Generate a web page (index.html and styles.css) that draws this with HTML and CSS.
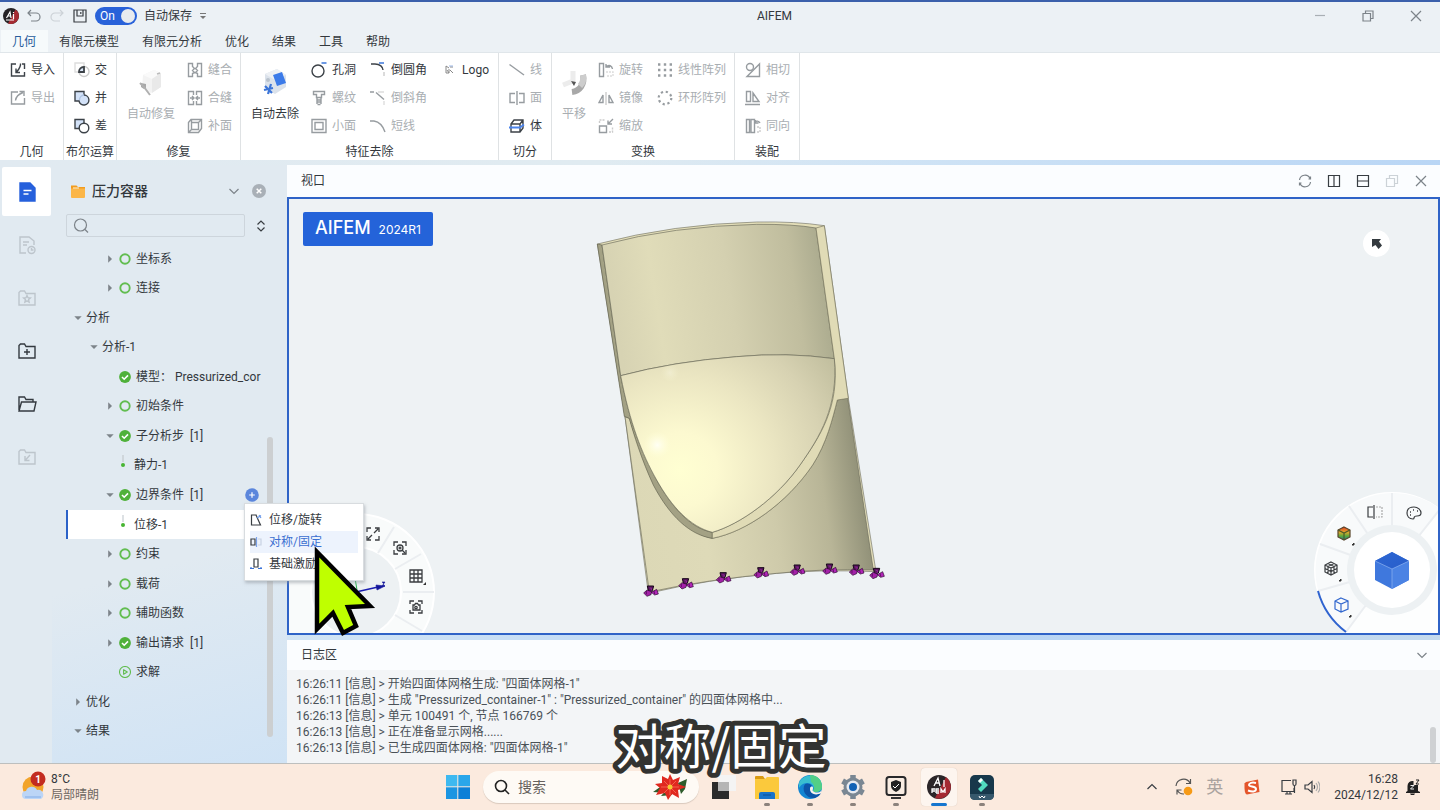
FILE: index.html
```html
<!DOCTYPE html>
<html lang="zh-CN">
<head>
<meta charset="utf-8">
<title>AIFEM</title>
<link rel="stylesheet" href="styles.css">
</head>
<body>
<svg class="defs" aria-hidden="true">
  <defs>
    <linearGradient id="cube-top" x1="0" y1="0" x2="1" y2="1"><stop offset="0" stop-color="#2d67d3"/><stop offset="1" stop-color="#285dca"/></linearGradient>
    <linearGradient id="rainbow" x1="0" y1="0" x2="0" y2="1"><stop offset="0" stop-color="#e33b20"/><stop offset=".4" stop-color="#e0a82e"/><stop offset=".7" stop-color="#5aa83a"/><stop offset="1" stop-color="#247a9a"/></linearGradient>
  </defs>
  <symbol id="i-ring" viewBox="0 0 12 12"><circle cx="6" cy="6" r="4.7" fill="none" stroke="#62bd50" stroke-width="1.9"/></symbol>
  <symbol id="i-ok" viewBox="0 0 12 12"><circle cx="6" cy="6" r="5.9" fill="#4fb13a"/><path d="M3 6l2.2 2.2L9 4.4" fill="none" stroke="#fff" stroke-width="1.6"/></symbol>
  <symbol id="i-play" viewBox="0 0 12 12"><circle cx="6" cy="6" r="5.5" fill="none" stroke="#62bd50" stroke-width="1.1"/><path d="M4.6 3.7v4.6L8.3 6z" fill="none" stroke="#62bd50" stroke-width="1.1" stroke-linejoin="round"/></symbol>
  <symbol id="i-down" viewBox="0 0 8 8"><path d="M.3 2.2h7.4L4 6z" fill="#7d848a"/></symbol>
  <symbol id="i-right" viewBox="0 0 8 8"><path d="M2.2.3v7.4L6 4z" fill="#7d848a"/></symbol>
  <symbol id="i-folder" viewBox="0 0 20 20"><path d="M2 4.5V17h16V5.5H9L7.500 3H3.500z"/></symbol>
</svg>

<header class="titlebar">
  <div class="quick">
    <svg class="logo" viewBox="0 0 16 16"><circle cx="8" cy="8" r="8" fill="#252326"/><path d="M12.500 1.500A8 8 0 0 1 5 15.500z" fill="#a52a32"/><path d="M3.500 10L7 4l1 6M5 8h3M3 12h8M10.500 6v5M10.500 4v1" fill="none" stroke="#fff" stroke-width="1.200"/></svg>
    <button class="plain" aria-label="撤销"><svg class="ic16 mid" viewBox="0 0 16 16"><path d="M5 2L2 5l3 3M2 5h8a4 4 0 0 1 0 8H5"/></svg></button>
    <button class="plain" aria-label="重做"><svg class="ic16 pale" viewBox="0 0 16 16"><path d="M11 2l3 3-3 3M14 5H6a4 4 0 0 0 0 8h5"/></svg></button>
    <button class="plain" aria-label="保存"><svg class="ic16 dark" viewBox="0 0 16 16"><path d="M2 2h12v12H2zM5 2v6h6V2M8.800 4v2"/></svg></button>
    <label class="switch"><input type="checkbox" checked aria-label="自动保存"><span>On</span></label>
    <span class="autosave">自动保存</span>
    <button class="plain" aria-label="更多"><svg class="ic8" viewBox="0 0 8 8"><path d="M1 1.500h6" stroke="#777" fill="none"/><path d="M1 4h6L4 7z" fill="#777"/></svg></button>
  </div>
  <h1 class="app-name">AIFEM</h1>
  <div class="winctl">
    <button class="plain" aria-label="最小化"><svg class="ic12 pale2" viewBox="0 0 12 12"><path d="M1 5.500h10"/></svg></button>
    <button class="plain" aria-label="还原"><svg class="ic12 mid" viewBox="0 0 12 12"><path d="M1 3.500h7.500V11H1zM3.500 3.500V1H11v7.500H8.500"/></svg></button>
    <button class="plain" aria-label="关闭"><svg class="ic12 mid" viewBox="0 0 12 12"><path d="M1 1l10 10M11 1L1 11"/></svg></button>
  </div>
</header>

<nav class="tabs">
  <a href="#" class="on">几何</a><a href="#">有限元模型</a><a href="#">有限元分析</a><a href="#">优化</a><a href="#">结果</a><a href="#">工具</a><a href="#">帮助</a>
</nav>

<section class="ribbon">
  <div class="group g-geo">
    <div class="tools"><div class="col">
      <button><svg viewBox="0 0 16 16"><path d="M6 2H1.500v12h13v-4M14.500 7V2H12M10.500 1.500C11 5 9 7 6.500 10M6 6.500V10.500h4"/></svg>导入</button>
      <button disabled><svg viewBox="0 0 16 16"><path d="M8 2H1.500v12h13V8M5.500 10.500C6 6 9 4 13 2.500M9.500 1.500H14V6"/></svg>导出</button>
    </div></div>
    <div class="caption">几何</div>
  </div>
  <div class="group g-bool">
    <div class="tools"><div class="col">
      <button><svg viewBox="0 0 16 16"><path d="M1 1h9v9H1z" stroke="#ddd"/><circle cx="10" cy="9.500" r="5" stroke="#ccc"/><path d="M5 10a5 5 0 0 1 5-5v5z" fill="#dce7f8" stroke-width="1.800"/></svg>交</button>
      <button><svg viewBox="0 0 16 16"><path d="M1 1.500h9V5a5 5 0 1 1-5 6H1z" fill="#d3e2f8"/><path d="M5.500 10a5 5 0 0 1 4.500-5" stroke="#aec4e4"/></svg>并</button>
      <button><svg viewBox="0 0 16 16"><path d="M1 1.500h9V5L5 10.500H1z" fill="#d3e2f8"/><circle cx="10" cy="10" r="4.800" fill="#fff"/></svg>差</button>
    </div></div>
    <div class="caption">布尔运算</div>
  </div>
  <div class="group g-fix">
    <div class="tools">
      <button class="big" disabled><svg viewBox="0 0 32 32"><path d="M8 9l11-5 7 3v14l-10 6-9-5z" fill="#f3f3f3"/><path d="M8 9l9 4 9-6-7-3z" fill="#fafafa"/><path d="M17 13v14l9-6V7z" fill="#e9e9e9"/><path d="M22 8l3-1" stroke="#bbb"/><path d="M6 17l5 1v4l-2 1-3-2z" fill="#a8a8a8"/><path d="M9 21l6 8M5 17l5 5" stroke="#b0b0b0" stroke-width="2"/></svg>自动修复</button>
      <div class="col">
        <button disabled><svg viewBox="0 0 16 16"><path d="M1.500 1.500h4v3l2 2-2 2 2 2-2 1v3h-4zM14.500 1.500h-4v3l-2 2 2 2-2 2 2 1v3h4z"/></svg>缝合</button>
        <button disabled><svg viewBox="0 0 16 16"><path d="M6.500 5V1.500h-5v13h5V11M9.500 5V1.500h5v13h-5V11M3 8h4M5 6l2 2-2 2M13 8H9M11 6L9 8l2 2"/></svg>合缝</button>
        <button disabled><svg viewBox="0 0 16 16"><path d="M1.500 4.500L4 1.500h10.500v9l-3 4h-10zM4.500 4.500h7v7h-7zM4.500 11.500l-3 3M11.500 4.500l3-3M4.500 4.500V1.500"/></svg>补面</button>
      </div>
    </div>
    <div class="caption">修复</div>
  </div>
  <div class="group g-feat">
    <div class="tools">
      <button class="big"><svg viewBox="0 0 32 32"><path d="M6 8l12-5 9 6v12l-11 7-10-6z" fill="#dbe2eb"/><path d="M6 8l12-5 9 6-11 5z" fill="#edf0f4"/><path d="M14 9l9-3 4 11-9 3z" fill="#3c7be9"/><circle cx="9" cy="14" r="2" fill="#b9c2cd"/><path d="M6 20l7 7M12 18l-3 10M5 24l9-2" stroke="#3c75d8" stroke-width="2.200"/></svg>自动去除</button>
      <div class="col">
        <button><svg viewBox="0 0 16 16"><circle cx="7" cy="9" r="6"/><path d="M10.500 1h5" stroke="#5c8de0" stroke-width="1.800"/></svg>孔洞</button>
        <button disabled><svg viewBox="0 0 16 16"><path d="M2.500 1.500h11v3h-3v3h-5v-3h-3zM5.500 7.500h5M6 10h4M6 12h4M6.500 14.500h3M6 8v6M10 8v6"/></svg>螺纹</button>
        <button disabled><svg viewBox="0 0 16 16"><path d="M1 1.500h14v13H1zM4 4.500h8v7H4z"/></svg>小面</button>
      </div>
      <div class="col">
        <button><svg viewBox="0 0 16 16"><path d="M1 2h4c5 0 8 3 8 6"/><path d="M9 1h5" stroke="#5c8de0" stroke-width="1.800"/><path d="M14 10v4" stroke="#ccc"/></svg>倒圆角</button>
        <button disabled><svg viewBox="0 0 16 16"><path d="M0 2h4M6 2.500l8 7"/><path d="M8 2h6M14 11v4" stroke="#ddd"/></svg>倒斜角</button>
        <button disabled><svg viewBox="0 0 16 16"><path d="M0 3h4c6 1 9 5 11 11"/></svg>短线</button>
      </div>
      <div class="col">
        <button><svg viewBox="0 0 16 16"><path d="M5 4v7M5 4l3 2M5 11h3l-2-3M8 7v4" stroke="#888" stroke-width="1"/><path d="M9 5h3M9 8l3 3" stroke="#888" stroke-width="1"/><path d="M8 4h4" stroke="#9bb6e5" stroke-width="1"/></svg>Logo</button>
      </div>
    </div>
    <div class="caption">特征去除</div>
  </div>
  <div class="group g-cut">
    <div class="tools"><div class="col">
      <button disabled><svg viewBox="0 0 16 16"><path d="M.5 2.500l14.500 10.500"/></svg>线</button>
      <button disabled><svg viewBox="0 0 16 16"><path d="M6 3.500H1v9h5M10 3.500h5v9h-5M8 1v14"/></svg>面</button>
      <button><svg viewBox="0 0 16 16"><path d="M2 6l3-4h9v8l-3 4H2zM2 6h9v8M11 6l3-4"/><path d="M0 9.500h11l4-3" stroke="#4b84ec" stroke-width="1.800"/></svg>体</button>
    </div></div>
    <div class="caption">切分</div>
  </div>
  <div class="group g-move">
    <div class="tools">
      <button class="big" disabled><svg viewBox="0 0 32 32"><path d="M15 5v12M5 19l10-4" stroke="#ececec" stroke-width="5"/><path d="M25 9c2 9-3 16-11 17" stroke="#a8a8a8" stroke-width="6" fill="none"/><path d="M25 9c1 5 0 8-3 11" stroke="#cdcdcd" stroke-width="6" fill="none"/><path d="M13 15l5 1-2 4z" fill="#555"/></svg>平移</button>
      <div class="col">
        <button disabled><svg viewBox="0 0 16 16"><path d="M1.500 1.500h4v13h-4zM8 5c3-3 6-1 6.500 2M8 2v3h4"/><path d="M8 10h7v4H8" stroke="#ddd" stroke-dasharray="2 1"/></svg>旋转</button>
        <button disabled><svg viewBox="0 0 16 16"><path d="M1 12.500L5 5v7.500zM15 12.500L11 5v7.500z"/><path d="M8 2v13" stroke="#ccc"/></svg>镜像</button>
        <button disabled><svg viewBox="0 0 16 16"><path d="M1.500 8h7v6.500h-7zM15 1l-5 5M10 2.500V6h4"/><path d="M1.500 5V2H7M11 14h3.500V9" stroke="#ccc" stroke-dasharray="2 1"/></svg>缩放</button>
      </div>
      <div class="col">
        <button disabled><svg viewBox="0 0 16 16"><path d="M1 2.500h14M1 8h14M1 13.500h14" stroke-width="2.400" stroke-dasharray="2.400 3.400"/></svg>线性阵列</button>
        <button disabled><svg viewBox="0 0 16 16"><circle cx="8" cy="8" r="6.300" stroke-width="2.200" stroke-dasharray="2.200 2.748"/></svg>环形阵列</button>
      </div>
    </div>
    <div class="caption">变换</div>
  </div>
  <div class="group g-asm">
    <div class="tools"><div class="col">
      <button disabled><svg viewBox="0 0 16 16"><circle cx="5" cy="5" r="3.500"/><path d="M2 14.500L14.500 2v12.500z"/></svg>相切</button>
      <button disabled><svg viewBox="0 0 16 16"><path d="M1.500 1.500h4v10h-4zM8 3l6 8.500H8zM0 14.500h15" /></svg>对齐</button>
      <button disabled><svg viewBox="0 0 16 16"><path d="M1.500 1.500h3v13h-3zM6 1.500h3.500v13H6zM10 5c1-3 4-2 5 0M10.500 2v3h3"/><path d="M12 9h3v5h-3" stroke="#ccc" stroke-dasharray="2 1"/></svg>同向</button>
    </div></div>
    <div class="caption">装配</div>
  </div>
</section>

<main class="work">
  <nav class="rail">
    <button class="on" aria-label="模型"><svg viewBox="0 0 20 20"><path d="M3 1h10l5 5v13H3z" fill="#2660dc" stroke="#2660dc"/><path d="M6.500 8.500h8M6.500 12h5" stroke="#fff" stroke-width="1.500"/></svg></button>
    <button class="off" aria-label="记录"><svg viewBox="0 0 20 20"><path d="M9 18H3V2h9l5 4v4M6 7h6M6 10h4"/><circle cx="14.500" cy="15" r="3.500"/><path d="M14.500 13v2h2"/></svg></button>
    <button class="off" aria-label="收藏"><svg viewBox="0 0 20 20"><use href="#i-folder"/><path d="M10 7.500l1 2.200 2.400.3-1.800 1.600.5 2.400-2.100-1.200L7.900 14l.5-2.400L6.600 10l2.400-.3z"/></svg></button>
    <button aria-label="新建"><svg viewBox="0 0 20 20"><use href="#i-folder"/><path d="M10 8v6M7 11h6"/></svg></button>
    <button aria-label="打开"><svg viewBox="0 0 20 20"><path d="M2 16V3h5.500L9 5.500h7V8M2 17L4.500 8H19l-2 9z"/></svg></button>
    <button class="off" aria-label="导入"><svg viewBox="0 0 20 20"><use href="#i-folder"/><path d="M13 8l-5 5.500M8 9v4.500h4.500"/></svg></button>
  </nav>

  <aside class="panel">
    <div class="panel-head">
      <svg class="ic16" viewBox="0 0 16 16"><path d="M1 2.500h5.500L8 4h7v3H1z" fill="#f29c1f"/><path d="M1 5.500h14V14q0 1-1 1H2q-1 0-1-1z" fill="#fbb648"/><path d="M3 5h6" stroke="#fff3d6"/></svg>
      <h2>压力容器</h2>
      <button class="plain" aria-label="展开"><svg class="ic12 mid" viewBox="0 0 12 12"><path d="M1.500 4L6 8.500 10.500 4"/></svg></button>
      <button class="plain" aria-label="关闭"><svg class="ic14" viewBox="0 0 14 14"><circle cx="7" cy="7" r="7" fill="#a9b0b7"/><path d="M4.700 4.700l4.600 4.600M9.300 4.700L4.700 9.300" stroke="#fff" stroke-width="1.500"/></svg></button>
    </div>
    <div class="search-row">
      <label class="find"><svg class="ic16 mid" viewBox="0 0 16 16"><circle cx="7.500" cy="7" r="6"/><path d="M12 11.500l3 3"/></svg><input type="search" aria-label="搜索模型树"></label>
      <button class="plain" aria-label="排序"><svg class="ic12 dark" viewBox="0 0 12 12"><path d="M2.500 4.500L6 1l3.500 3.500M2.500 7.500L6 11l3.500-3.500"/></svg></button>
    </div>
    <div class="tree-wrap">
      <ul class="tree">
        <li class="l3"><svg class="ar"><use href="#i-right"/></svg><svg class="st"><use href="#i-ring"/></svg>坐标系</li>
        <li class="l3"><svg class="ar"><use href="#i-right"/></svg><svg class="st"><use href="#i-ring"/></svg>连接</li>
        <li class="l1"><svg class="ar"><use href="#i-down"/></svg>分析</li>
        <li class="l2"><svg class="ar"><use href="#i-down"/></svg>分析-1</li>
        <li class="l3 leaf"><svg class="st"><use href="#i-ok"/></svg>模型： Pressurized_cor</li>
        <li class="l3"><svg class="ar"><use href="#i-right"/></svg><svg class="st"><use href="#i-ring"/></svg>初始条件</li>
        <li class="l3"><svg class="ar"><use href="#i-down"/></svg><svg class="st"><use href="#i-ok"/></svg>子分析步&nbsp; [1]</li>
        <li class="l4"><svg class="dot" viewBox="0 0 6 20"><path d="M3 0v7" stroke="#cfd6db" stroke-width="2"/><circle cx="3" cy="10" r="2" fill="#48b533"/></svg>静力-1</li>
        <li class="l3"><svg class="ar"><use href="#i-down"/></svg><svg class="st"><use href="#i-ok"/></svg>边界条件&nbsp; [1]<button class="plain add" aria-label="添加"><svg class="ic14" viewBox="0 0 14 14"><circle cx="7" cy="7" r="6.800" fill="#5b86dc"/><path d="M7 4.200v5.600M4.200 7h5.600" stroke="#fff" stroke-width="1.200"/></svg></button></li>
        <li class="l4 sel"><svg class="dot" viewBox="0 0 6 20"><path d="M3 0v7" stroke="#dde1e4" stroke-width="2"/><circle cx="3" cy="10" r="2" fill="#48b533"/></svg>位移-1</li>
        <li class="l3"><svg class="ar"><use href="#i-right"/></svg><svg class="st"><use href="#i-ring"/></svg>约束</li>
        <li class="l3"><svg class="ar"><use href="#i-right"/></svg><svg class="st"><use href="#i-ring"/></svg>载荷</li>
        <li class="l3"><svg class="ar"><use href="#i-right"/></svg><svg class="st"><use href="#i-ring"/></svg>辅助函数</li>
        <li class="l3"><svg class="ar"><use href="#i-right"/></svg><svg class="st"><use href="#i-ok"/></svg>输出请求&nbsp; [1]</li>
        <li class="l3 leaf"><svg class="st"><use href="#i-play"/></svg>求解</li>
        <li class="l1"><svg class="ar"><use href="#i-right"/></svg>优化</li>
        <li class="l1"><svg class="ar"><use href="#i-down"/></svg>结果</li>
      </ul>
      <div class="thumb"></div>
    </div>
  </aside>

  <div class="stage">
    <section class="viewport">
      <header class="bar">
        <h2>视口</h2>
        <button class="plain" aria-label="刷新"><svg class="ic14 mid" viewBox="0 0 14 14"><path d="M1.500 6A5.500 5.500 0 0 1 12 4.500M12.500 8A5.500 5.500 0 0 1 2 9.500M12.500 2.500v2.500h-2M1.500 11.500V9h2"/></svg></button>
        <button class="plain" aria-label="左右分屏"><svg class="ic14 dark" viewBox="0 0 14 14"><path d="M1.500 1.500h11v11h-11zM7 1.500v11"/></svg></button>
        <button class="plain" aria-label="上下分屏"><svg class="ic14 dark" viewBox="0 0 14 14"><path d="M1.500 1.500h11v11h-11zM1.500 7h11"/></svg></button>
        <button class="plain" aria-label="还原"><svg class="ic14 pale" viewBox="0 0 14 14"><path d="M1.500 4.500h8v8h-8zM4.500 4.500v-3h8v8h-3"/></svg></button>
        <button class="plain" aria-label="关闭"><svg class="ic14 mid" viewBox="0 0 14 14"><path d="M2 2l10 10M12 2L2 12"/></svg></button>
      </header>
      <div class="canvas">
        <div class="badge"><strong>AIFEM</strong><span>2024R1</span></div>
        <button class="pick" aria-label="选择"><svg class="ic12" viewBox="0 0 12 12"><path d="M1 1h9L8 3.500l3 4L7.500 11l-3-4L1 9z" fill="#343a3f"/></svg></button>

        <svg class="model" viewBox="0 0 930 1200" aria-label="压力容器模型">
          <defs>
            <linearGradient id="cyl" x1="0" y1="0" x2="1" y2="-.1"><stop offset="0" stop-color="#d7d3b3"/><stop offset=".18" stop-color="#e0dcb9"/><stop offset=".5" stop-color="#d4d0b0"/><stop offset=".78" stop-color="#c0bd9e"/><stop offset=".93" stop-color="#a9a98d"/><stop offset="1" stop-color="#b3b295"/></linearGradient>
            <linearGradient id="low" gradientUnits="userSpaceOnUse" x1="130" y1="950" x2="830" y2="850"><stop offset="0" stop-color="#dcd8b6"/><stop offset=".3" stop-color="#dedab8"/><stop offset=".6" stop-color="#cecaaa"/><stop offset=".82" stop-color="#b8b597"/><stop offset="1" stop-color="#8e8e76"/></linearGradient>
            <radialGradient id="dome" gradientUnits="userSpaceOnUse" cx="270" cy="780" r="560"><stop offset="0" stop-color="#ffffd2"/><stop offset=".2" stop-color="#fcf9d0"/><stop offset=".5" stop-color="#ebe6c2"/><stop offset=".78" stop-color="#d7d2b2"/><stop offset="1" stop-color="#c2bf9f"/></radialGradient>
            <radialGradient id="glow"><stop offset="0" stop-color="#fffff4"/><stop offset="1" stop-color="#ffffd8" stop-opacity="0"/></radialGradient>
            <g id="pin"><path d="M-8-15H11L7-1-4 2z" fill="#5a1660" stroke="#160618" stroke-width="3"/><path d="M-1-9l6 1-2 8" fill="none" stroke="#a62bac" stroke-width="2"/><path d="M-19 6l10-9 14 5-2 9-12 5z" fill="#a321a8" stroke="#2a062d" stroke-width="2"/><path d="M4 4l16-9 5 14-11 3z" fill="#b124b8" stroke="#2a062d" stroke-width="2"/><path d="M-11 0v10M12 0l2 10" stroke="#3a0b3d" stroke-width="2"/></g>
          </defs>
          <path d="M22 102Q250 42 500 36 620 34 703 47L775 565 858 1085Q690 1078 560 1090 350 1108 175 1150L105 620Z" fill="#e4dfb9" stroke="#77776a" stroke-width="2"/>
          <path d="M105 620L118 625C190 850 270 965 367 985 470 965 590 880 668 765 710 700 728 625 742 570L773 564 850 1080Q690 1076 560 1090 350 1108 178 1146Z" fill="url(#low)" stroke="#6d6c5c" stroke-width="2"/>
          <path d="M22 102L36 105 92 497C120 640 155 730 200 810 245 890 300 955 367 967V985C300 975 240 920 190 825 155 750 130 670 118 625L103 619 22 102Z" fill="#a3a184" stroke="#62624f" stroke-width="2"/>
          <path d="M36 105Q250 48 500 43 610 42 678 54L733 446Q590 426 440 440 250 455 92 497Z" fill="url(#cyl)" stroke="#6d6c5c" stroke-width="2"/>
          <path d="M678 54L703 47 775 565 742 570C728 625 710 700 668 765 590 880 470 965 367 985V967C450 943 560 865 630 765 690 680 750 590 733 446Z" fill="#e0dbb6" stroke="#77765f" stroke-width="2"/>
          <path d="M92 497Q250 455 440 440 590 426 733 446C745 590 690 680 630 765 560 865 450 943 367 967 300 950 245 890 200 810 155 730 120 640 92 497Z" fill="url(#dome)" stroke="#6d6c5c" stroke-width="2"/>
          <circle cx="202" cy="705" r="42" fill="url(#glow)"/><circle cx="240" cy="488" r="28" fill="url(#glow)" opacity=".3"/>
          <use href="#pin" x="180" y="1143"/><use href="#pin" x="285" y="1121"/><use href="#pin" x="398" y="1103"/><use href="#pin" x="511" y="1088"/><use href="#pin" x="620" y="1080"/><use href="#pin" x="717" y="1077"/><use href="#pin" x="797" y="1080"/><use href="#pin" x="858" y="1090"/>
        </svg>

        <svg class="wheel wheel-left" viewBox="0 0 160 160">
          <circle cx="80" cy="80" r="78" fill="#f9fbfb" stroke="#fff" stroke-width="2"/>
          <circle cx="80" cy="80" r="45" fill="#edf1f3" stroke="#fff" stroke-width="2"/>
          <path d="M102 41l16-26M119 57l26-15M127 80h31M119 103l27 16" stroke="#ebeef1" stroke-width="2"/>
          <g fill="none" stroke="#3a3d40" stroke-width="1.300">
            <path d="M91 20v-4h4M99 16h4v4M103 24v4h-4M95 28h-4v-4M92 27l4-4M102 17l-4 4"/>
            <path d="M118 34v-4h4M126 30h4v4M130 38v4h-4M122 42h-4v-4"/><circle cx="124" cy="36" r="3"/><path d="M126 38l3 3M124 34.500v3M122.500 36h3"/>
            <path d="M134 58h12v12h-12zM138 58v12M142 58v12M134 62h12M134 66h12"/>
            <path d="M134 92v-3h4M142 89h4v3M146 98v3h-4M138 101h-4v-3M137 93h1.500l1-1.500h2l1 1.500h1.500v5h-7z"/><circle cx="140" cy="95.500" r="1.200"/>
          </g>
          <path d="M150 73v-3l-3 3z" fill="#333"/>
          <path d="M79 66l2 12" stroke="#29b14c"/><path d="M80 80l22-5" stroke="#1a1db0" stroke-width="1.500"/><path d="M100 73l9 1-8 4zM106 70h3l-3 4h3" fill="#15179a" stroke="#15179a" stroke-width=".6"/>
        </svg>

        <svg class="wheel wheel-right" viewBox="0 0 160 160">
          <circle cx="80" cy="80" r="77" fill="#fdfefe" stroke="#fff" stroke-width="2"/>
          <path d="M80 80L128 19A77 77 0 1 0 34 142Z" fill="#f8fafb"/>
          <path d="M80 80L128 19M80 80V3M80 80L37 16M80 80L8 54M80 80L6 101M80 80L34 142" stroke="#ebeef1" stroke-width="2"/>
          <circle cx="80" cy="80" r="45" fill="#edf1f3"/><circle cx="80" cy="80" r="38" fill="#fff"/>
          <path d="M6 101A77 77 0 0 0 34 142" fill="none" stroke="#2f63cf" stroke-width="2"/>
          <path d="M80 62l17 9v19l-17 9-17-9V71z" fill="#3f78dd"/><path d="M80 62l17 9-17 8-17-8z" fill="url(#cube-top)"/><path d="M80 79v20l17-9V71z" fill="#4b83e4"/><path d="M63 71l17 8 17-8M80 79v20" fill="none" stroke="#8db1ef" stroke-width=".7"/>
          <g fill="none" stroke="#3a3d40" stroke-width="1.200">
            <path d="M61 17h-5v10h5M62 15v14"/><path d="M64 17h6v10h-6" stroke="#aaa" stroke-dasharray="2 1"/>
            <path d="M101 29c-4 0-6-3-6-6 0-4 3-6 7-6s7 3 7 6-2 3-4 3-3 1-3 2-1 1-1 1z"/><path d="M98 22h1M101 20h1M105 21h1M98 25h1" stroke-width="1.600"/>
            <path d="M32 37l6 3v7l-6 3-6-3v-7z" fill="url(#rainbow)" stroke="#59452b"/><path d="M26 40l6 3 6-3M32 43v7" stroke="#4d5b27"/>
            <path d="M19 72l6 3v7l-6 3-6-3v-7zM13 75l6 3 6-3M19 78v7M13 78.500l6 3 6-3M16 73.500l6 3v7M22 73.500l-6 3v7"/>
            <path d="M29 108l7 3v8l-7 3-6-3v-8zM23 111l6 3 7-3M29 114v8" stroke="#3267ce"/>
          </g>
          <path d="M42 55v-2l-2 2zM29 91v-2l-2 2zM39 127v-2l-2 2z" fill="#333" stroke="#333"/>
        </svg>
      </div>
    </section>

    <section class="log">
      <header class="bar"><h2>日志区</h2><button class="plain" aria-label="收起"><svg class="ic12 mid" viewBox="0 0 12 12"><path d="M1.500 4L6 8.500 10.500 4"/></svg></button></header>
      <div class="lines">
        <p>16:26:11 [信息] &gt; 开始四面体网格生成: "四面体网格-1"</p>
        <p>16:26:11 [信息] &gt; 生成 "Pressurized_container-1" : "Pressurized_container" 的四面体网格中...</p>
        <p>16:26:13 [信息] &gt; 单元 100491 个, 节点 166769 个</p>
        <p>16:26:13 [信息] &gt; 正在准备显示网格......</p>
        <p>16:26:13 [信息] &gt; 已生成四面体网格: "四面体网格-1"</p>
        <div class="log-thumb"></div>
      </div>
    </section>
  </div>

  <div class="menu" role="menu">
    <button role="menuitem"><svg class="ic12 dark" viewBox="0 0 12 12"><path d="M6 1H1.500v10h9L6 1zM6 1l4.500 10"/><path d="M7 4l4-2.500M9 1l2 3" stroke="#6a98e8"/></svg>位移/旋转</button>
    <button role="menuitem" class="on"><svg class="ic12 dark" viewBox="0 0 12 12"><path d="M1 3h4v6H1z"/><path d="M6.500 1v10" stroke="#7aa2ea"/><path d="M8 3h3v6H8" stroke="#c9d3e3"/></svg>对称/固定</button>
    <button role="menuitem"><svg class="ic12 dark" viewBox="0 0 12 12"><path d="M4 1h4v8H4z"/><path d="M0 10.500h4M8 10.500h4M1 9v2M11 9v2" stroke="#3d74d8"/></svg>基础激励</button>
  </div>
  <svg class="cursor" viewBox="0 0 66 92"><path d="M4 7V84L20 68 30 88 43 81 35 62 57 61Z" fill="#bfff00" stroke="#000" stroke-width="4.500"/></svg>
</main>

<footer class="taskbar">
  <div class="weather">
    <svg viewBox="0 0 28 32"><circle cx="12" cy="16" r="10.500" fill="#f2a42b"/><path d="M5 28a4 4 0 0 1 0-8 6 6 0 0 1 11-1 5 5 0 0 1 4 9z" fill="#bcd5f6"/><path d="M4 26h16" stroke="#9fc1ef" stroke-width="2"/><circle cx="17" cy="8" r="7.500" fill="#c32c20"/><text x="17" y="12" text-anchor="middle">1</text></svg>
    <p><b>8°C</b><span>局部晴朗</span></p>
  </div>
  <div class="apps">
    <button aria-label="开始"><svg viewBox="0 0 24 26"><path d="M0 1h11.300v11.300H0z" fill="#3eb9f0"/><path d="M12.300 1H24v11.300H12.300z" fill="#2aa6ea"/><path d="M0 13.300h11.300V25H0z" fill="#1b95e2"/><path d="M12.300 13.300H24V25H12.300z" fill="#0c7fd7"/></svg></button>
    <label class="tsearch"><svg class="ic16" viewBox="0 0 16 16"><circle cx="7" cy="7" r="5.500" fill="none" stroke="#222" stroke-width="1.600"/><path d="M11 11l4 4" stroke="#222" stroke-width="1.600"/></svg><input type="text" placeholder="搜索" aria-label="搜索"><svg class="flower" viewBox="0 0 34 26"><path d="M0 18l10-7 4 8zM34 5l-9 4 3 11 4-5zM8 22l7-8 4 7z" fill="#2e5c2c"/><path d="M17 0l3 6 7-3-2 7 8 3-8 3 1 8-7-4-4 6-3-7-9 2 4-7-5-4 7-1 0-7 6 3z" fill="#e0281f"/><path d="M17 5v16M8 13h18M11 7l12 12M23 7L11 19" stroke="#f4604d"/><circle cx="17" cy="13" r="2.500" fill="#f6c834"/></svg></label>
    <button aria-label="任务视图"><svg viewBox="0 0 24 26"><path d="M0 8h17v17H0z" fill="#2b2b2b"/><path d="M6 1h18v16H6z" fill="#f4f4f4"/><path d="M6 8h11v9H6z" fill="#b5b5b5"/></svg></button>
    <button class="run" aria-label="文件资源管理器"><svg viewBox="0 0 24 26"><path d="M0 3q0-1 1-1h7l2 3H0z" fill="#d99a12"/><path d="M0 5h10l2-2h11q1 0 1 1v21H0z" fill="#fbc93c"/><path d="M4 25v-5q0-2 2-2h12q2 0 2 2v5z" fill="#1873c9"/><path d="M8 21h8" stroke="#0b4f93"/></svg></button>
    <button class="run" aria-label="Edge"><svg viewBox="0 0 24 26"><circle cx="12" cy="13" r="12" fill="#1385d2"/><path d="M1 9C5-1 24-2 24 13c0 5-7 6-9 4 2-3 0-8-6-8-4 0-7 3-8 5z" fill="#39bfd0"/><path d="M12 1c8 0 12 6 12 12 0 5-7 6-9 4 3-4 0-8-2-9z" fill="#53cf86"/><path d="M7 10c-4 6 1 15 10 14 3-1 5-3 6-5-5 3-11 1-11-4 0-2 1-3 2-3-2-3-5-3-7-2z" fill="#0c55a8"/><path d="M12 15c0-3 3-3 3-1s-1 2 0 3c2 2 6 2 8 0l0 2c-5 3-11 1-11-4z" fill="#faf2e9"/></svg></button>
    <button class="run" aria-label="设置"><svg viewBox="0 0 24 26"><circle cx="12" cy="13" r="9.500" fill="#7a8793"/><path d="M12 1v24M1.600 7l20.800 12M22.400 7L1.600 19" stroke="#7a8793" stroke-width="5.500"/><circle cx="12" cy="13" r="6.500" fill="#e7eaf0"/><circle cx="12" cy="13" r="4" fill="#1262b5"/></svg></button>
    <button class="run" aria-label="安全"><svg viewBox="0 0 24 26"><rect x="2.500" y="3" width="19" height="18" rx="2.500" fill="#f8ece2" stroke="#28282a" stroke-width="2"/><path d="M12 6l5 2v4c0 3-3 5-5 6-2-1-5-3-5-6V8z" fill="#222"/><path d="M9 12l2 2 4-4" stroke="#fff" fill="none"/><path d="M7 24h10" stroke="#333" stroke-width="2"/></svg></button>
    <button class="run cur" aria-label="AIFEM"><svg viewBox="0 0 24 26"><circle cx="12" cy="13" r="12" fill="#2b2629"/><path d="M19 3A12 12 0 0 1 8 24z" fill="#a42932"/><path d="M7 12l4-8 2 8M8 9h4M5 19v-4h3M5 17h3M9 19v-4h3M9 17h3M9 19h3M14 19v-4l2 3 2-3v4M17 6v7" fill="none" stroke="#fff" stroke-width="1.300"/></svg></button>
    <button class="run" aria-label="Filmora"><svg viewBox="0 0 24 26"><rect y="1" width="24" height="25" rx="5" fill="#17384b"/><path d="M0 20h24v1q0 5-5 5H5q-5 0-5-5z" fill="#36586c"/><path d="M8 7l3-3 7 7-7 7-3-3 4-4z" fill="#51dcc0"/><path d="M8 7l3-3 2 2-3 3z" fill="#fff"/><path d="M9 22l1 2 2-2 2 2 1-2" fill="none" stroke="#fff"/></svg></button>
  </div>
  <div class="tray">
    <svg class="ic12 dark" viewBox="0 0 12 12"><path d="M1.500 8L6 3.500 10.500 8"/></svg>
    <svg class="sync" viewBox="0 0 18 18"><path d="M1 8a7.500 7.500 0 0 1 14-3M15.500 1v4.500H11M2 16.500V12h4.500M2.500 12.500A7 7 0 0 0 9 16" fill="none" stroke="#555" stroke-width="1.200"/><circle cx="13" cy="13" r="4.300" fill="#f69a16"/></svg>
    <span class="ime">英</span>
    <svg class="ic16 sogou" viewBox="0 0 16 16"><path d="M2 3l12-2.500L15.500 13 3 15.500Q0 15 .5 4.500z" fill="#e4552b"/><path d="M12 4C8 3 5 4 5 6s7 1 7 4-4 3-8 1.500" fill="none" stroke="#fff" stroke-width="2"/></svg>
    <svg class="ic16 net dark" viewBox="0 0 16 16"><path d="M10 1.500H1v11h12V9M4 15h7M6 12.500V15M9 12.500V15M12 1v4q0 1.500 1.500 1.500T15 5V1zM13.500 6.500V14"/></svg>
    <svg class="ic16 dark" viewBox="0 0 16 16"><path d="M1 6h3l4-3.500v11L4 10H1zM10 6q1.500 2 0 4"/><path d="M12 4q3 4 0 8M14 2.500q4 5.500 0 11" stroke="#aaa"/></svg>
    <time class="clock"><span>16:28</span><span>2024/12/12</span></time>
    <svg class="ic16" viewBox="0 0 16 16"><path d="M2.500 12V7a5 5 0 0 1 6-5V6H13v6l2 1v1H1v-1zM5 14.500h5q-1 2-2.500 2T5 14.500" fill="#202020"/><path d="M11 1h3l-3 4h3" fill="none" stroke="#202020"/><path d="M5.500 6.500H9L5.500 10H9" fill="none" stroke="#eee"/></svg>
  </div>
</footer>
<svg class="subtitle" viewBox="0 0 240 90"><text x="120" y="57" text-anchor="middle">对称/固定</text></svg>
</body>
</html>
```
FILE: styles.css
```css
* { box-sizing: border-box; }
body {
  margin: 0;
  height: 100vh;
  overflow: hidden;
  display: flex;
  flex-direction: column;
  position: relative;
  background: #e0eaf1;
  color: #33383d;
  font: 12px/16px Roboto, "Noto Sans CJK SC", sans-serif;
}
button, input { font: inherit; color: inherit; }
button { border: 0; background: none; padding: 0; }
h1, h2, p, ul { margin: 0; padding: 0; font-weight: 400; font-size: 12px; }
svg { flex: none; display: block; }
.defs { position: absolute; width: 0; height: 0; }
.ic8 { width: 8px; height: 8px; }
.ic12 { width: 12px; height: 12px; }
.ic14 { width: 14px; height: 14px; }
.ic16 { width: 16px; height: 16px; }
.dark, .mid, .pale, .pale2 { fill: none; stroke: #383d42; stroke-width: 1.200; }
.mid { stroke: #7c8389; }
.pale { stroke: #ccd2d7; }
.pale2 { stroke: #a9afb4; }

/* title bar and tabs */
.titlebar {
  flex: none;
  display: grid;
  grid-template-columns: 1fr auto 1fr;
  align-items: center;
  height: 30px;
  border-top: 2px solid #3b60ab;
  background: #ecf1f5;
}
.quick { display: flex; align-items: center; gap: 7px; padding-left: 3px; }
.logo { width: 16px; height: 16px; }
.app-name { padding-left: 109px; }
.switch {
  display: flex;
  align-items: center;
  width: 42px;
  height: 18px;
  padding: 0 2px 0 5px;
  border-radius: 9px;
  background: #2962d9;
  color: #fff;
}
.switch input {
  order: 2;
  appearance: none;
  width: 14px;
  height: 14px;
  margin: 0 0 0 auto;
  border-radius: 50%;
  background: #e8ebef;
}
.winctl { display: flex; justify-content: flex-end; gap: 36px; padding-right: 18px; }
.tabs { flex: none; display: flex; height: 23px; background: #ecf1f5; border-bottom: 1px solid #e0e6ea; }
.tabs a { padding: 3px 12px 0 11px; color: inherit; text-decoration: none; line-height: 18px; }
.tabs a.on { margin-left: 1px; background: #f6fafb; color: #285c9c; }

/* ribbon */
.ribbon { flex: none; display: flex; height: 107px; background: #fff; box-shadow: 0 1px 0 #dbe8f1; }
.group { display: flex; flex-direction: column; border-right: 1px solid #dfe2e4; }
.tools { flex: 1; display: flex; gap: 12px; padding: 3px 8px 0 10px; }
.caption { text-align: center; line-height: 16px; }
.col { display: grid; grid-auto-rows: 28px; align-content: start; }
.col button { display: flex; align-items: center; gap: 5px; white-space: nowrap; }
.ribbon svg { width: 16px; height: 16px; fill: none; stroke: #3c4248; stroke-width: 1.400; }
.ribbon :disabled { color: #a9aeb2; }
.ribbon :disabled svg { stroke: #979ca0; }
.big { display: flex; flex-direction: column; align-items: center; gap: 8px; padding-top: 10px; white-space: nowrap; }
.ribbon .big svg { width: 32px; height: 32px; stroke: none; }
.g-bool { min-width: 53px; }
.g-feat { min-width: 258px; }
.g-feat .col + .col { margin-left: 2px; }
.g-cut { min-width: 53px; }
.g-move .tools { gap: 8px; padding-left: 6px; }
.g-move .col + .col { margin-left: 6px; }
.g-asm { min-width: 65px; }

/* work area */
.work {
  flex: 1;
  min-height: 0;
  display: flex;
  position: relative;
  padding-top: 5px;
  background: linear-gradient(140deg, #e1eaf1 0, #e0ebf1 28%, #cfe3f5 42%, #b6d4f5 70%, #c9dceb 100%);
}
.rail { flex: none; display: flex; flex-direction: column; gap: 4px; width: 52px; padding: 2px 1px 2px 2px; background: #e1eaf1; }
.rail button { display: grid; place-items: center; height: 49px; border-radius: 2px; }
.rail .on { background: #fff; }
.rail svg { width: 20px; height: 20px; fill: none; stroke: #343a40; stroke-width: 1.400; }
.rail .off svg { stroke: #bdc5cc; }
.panel {
  flex: none;
  display: flex;
  flex-direction: column;
  width: 235px;
  background: linear-gradient(165deg, #e1eaf1 65%, #d0e3f5 100%);
}
.panel-head { display: flex; align-items: center; gap: 6px; padding: 15px 21px 0 18px; height: 37px; }
.panel-head h2 { flex: 1; font-size: 14px; font-weight: 500; line-height: 20px; }
.panel-head .plain + .plain { margin-left: 6px; }
.search-row { display: flex; align-items: center; gap: 10px; padding: 12px 20px 0 14px; }
.find { flex: 1; min-width: 0; display: flex; align-items: center; height: 23px; padding-left: 6px; border: 1px solid #cdd5dc; border-radius: 2px; }
.find input { flex: 1; min-width: 0; border: 0; background: none; outline: 0; }
.tree-wrap { flex: 1; position: relative; min-height: 0; margin-top: 7px; padding: 0 28px 17px 14px; }
.tree { height: 100%; list-style: none; display: grid; grid-auto-rows: 1fr; }
.tree li { display: flex; align-items: center; white-space: nowrap; min-width: 0; }
.ar { width: 8px; height: 8px; }
.st { width: 12px; height: 12px; margin: 0 5px; }
.dot { width: 6px; height: 20px; margin-right: 8px; }
.l1 { padding-left: 8px; }
.l2 { padding-left: 24px; }
.l3 { padding-left: 40px; }
.l1 .ar, .l2 .ar { margin-right: 4px; }
.l3.leaf { padding-left: 48px; }
.l4 { padding-left: 54px; }
.tree .sel { background: #fff; border-left: 2px solid #2b62c8; padding-left: 52px; }
.add { margin-left: auto; }
.thumb { position: absolute; right: 14px; top: 193px; bottom: 26px; width: 6px; border-radius: 3px; background: #cccfd1; }

.stage { flex: 1; min-width: 0; display: flex; flex-direction: column; gap: 5px; }
.viewport { flex: 1; min-height: 0; display: flex; flex-direction: column; }
.bar { flex: none; display: flex; align-items: center; gap: 15px; height: 32px; padding: 0 12px 0 14px; background: #fbfdff; }
.bar h2 { flex: 1; line-height: 18px; }
.canvas { flex: 1; position: relative; overflow: hidden; border: 2px solid #2f63c7; background: #eef2f4; }
.badge {
  position: absolute;
  left: 14px;
  top: 13px;
  display: flex;
  align-items: baseline;
  gap: 8px;
  padding: 0 12px;
  border-radius: 2px;
  background: #2463d9;
  color: #fff;
}
.badge strong { font: 500 18px/32px Inter, sans-serif; }
.badge span { font: 12px/32px Inter, sans-serif; }
.pick { position: absolute; right: 48px; top: 31px; display: grid; place-items: center; width: 27px; height: 27px; border-radius: 50%; background: #fff; }
.model { position: absolute; left: 301px; top: 11px; width: 310px; height: 400px; }
.wheel { position: absolute; width: 160px; height: 160px; }
.wheel-left { left: -13px; bottom: -39px; }
.wheel-right { right: -34px; bottom: -17px; }

.log { flex: none; display: flex; flex-direction: column; }
.log .bar { height: 30px; }
.lines { position: relative; height: 93px; padding: 6px 9px; background: #f3f5f7; color: #4a5157; }
.log-thumb { position: absolute; right: 4px; bottom: 0; width: 6px; height: 36px; border-radius: 3px; background: #cfd1d3; }

.menu {
  position: absolute;
  left: 244px;
  top: 343px;
  width: 120px;
  padding: 5px;
  background: #fff;
  border: 1px solid #d8dcdf;
  box-shadow: 1px 2px 3px #8a929988;
}
.menu button { display: flex; align-items: center; gap: 7px; width: 100%; height: 22px; }
.menu .on { background: #edf3fd; color: #3b6fd1; }
.cursor { position: absolute; left: 313px; top: 385px; width: 66px; height: 92px; }

/* taskbar */
.taskbar {
  flex: none;
  display: grid;
  grid-template-columns: 1fr auto 1fr;
  align-items: center;
  height: 47px;
  border-top: 1px solid #bdbfbe;
  background: #fbeade;
}
.weather { display: flex; align-items: center; gap: 2px; padding-left: 21px; }
.weather svg { width: 28px; height: 32px; }
.weather text { fill: #fff; font-size: 10px; font-weight: 700; }
.weather b, .weather span { display: block; font-weight: 400; }
.weather span { color: #6f6862; }
.apps { display: flex; align-items: center; gap: 7px; }
.apps button { position: relative; display: grid; place-items: center; width: 36px; height: 38px; border-radius: 4px; }
.apps button svg { width: 24px; height: 26px; }
.apps .cur { background: #fdf5ef; box-shadow: 0 0 1px #cbbcb0; }
.run::after { content: ""; position: absolute; left: 15px; bottom: 0; width: 6px; height: 3px; border-radius: 2px; background: #8b827c; }
.cur::after { left: 10px; width: 16px; background: #1676cf; }
.tsearch { display: flex; align-items: center; gap: 8px; width: 216px; height: 32px; padding: 0 12px 0 11px; border-radius: 16px; background: #fefaf5; box-shadow: 0 1px 1px #d9c9bd; }
.tsearch input { flex: 1; min-width: 0; border: 0; padding: 0; background: none; outline: 0; font-size: 14px; line-height: 20px; }
.tsearch input::placeholder { color: #66615d; }
.flower { width: 34px; height: 26px; }
.tray { display: flex; align-items: center; justify-content: flex-end; gap: 7px; padding-right: 19px; }
.sync { width: 18px; height: 18px; margin: 0 6px 0 10px; }
.ime { color: #aaa39e; font-size: 17px; line-height: 20px; }
.sogou { margin: 0 14px; }
.clock { display: flex; flex-direction: column; align-items: flex-end; margin-left: 7px; }

.subtitle {
  position: absolute;
  left: 50%;
  bottom: 13px;
  width: 240px;
  height: 90px;
  margin-left: -119px;
  pointer-events: none;
}
.subtitle text {
  font: 48px "Noto Sans CJK SC", sans-serif;
  fill: #fff;
  stroke: #333331;
  stroke-width: 10px;
  stroke-linejoin: round;
  paint-order: stroke;
}
```
